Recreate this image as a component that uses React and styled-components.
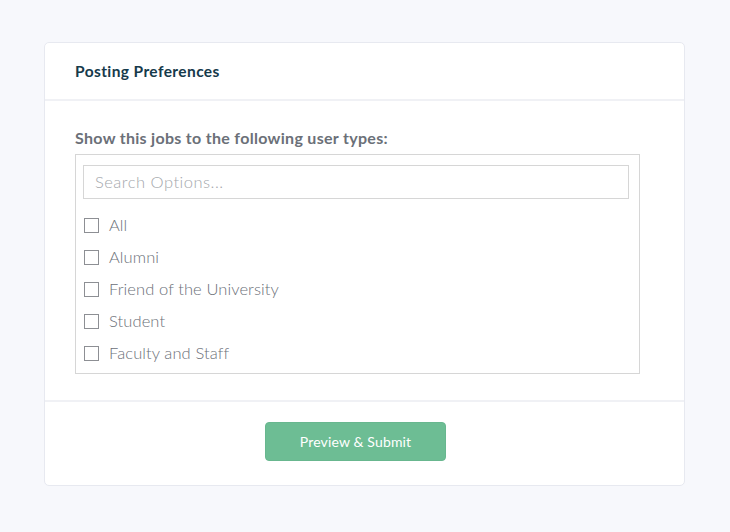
import styled, { createGlobalStyle } from 'styled-components';

const GlobalStyle = createGlobalStyle`
  body {
    margin: 0;
    background: #f7f8fc;
    font-family: Lato, "Noto Sans", sans-serif;
  }
`;

// fond de page
const Page = styled.div`
  padding: 42px 45px 45px 44px;
`;

// carte principale
const Card = styled.section`
  background: #fff;
  border: 1px solid #e7e9f0;
  border-radius: 5px;
`;

const Header = styled.header`
  height: 56px;
  display: flex;
  align-items: center;
  padding: 0 30px;
  border-bottom: 2px solid #f0f1f5;
`;

const Title = styled.h2`
  margin: 0;
  font-size: 15.5px;
  font-weight: 700;
  letter-spacing: 0.4px;
  color: #163a4b;
`;

const Body = styled.div`
  padding: 27px 30px 26px;
  border-bottom: 2px solid #f0f1f5;
`;

const Label = styled.div`
  font-size: 16px;
  font-weight: 700;
  letter-spacing: 0.3px;
  color: #6b7078;
  margin-bottom: 7px;
`;

// liste des options
const OptionsBox = styled.div`
  width: 565px;
  box-sizing: border-box;
  border: 1px solid #d6d6d6;
  padding: 10px 10px 4px 7px;
`;

const Search = styled.input`
  display: block;
  width: 100%;
  height: 34px;
  box-sizing: border-box;
  border: 1px solid #d6d6d6;
  padding: 0 11px;
  font-family: inherit;
  font-size: 16.5px;
  font-weight: 300;
  letter-spacing: 0.5px;
  color: #666;
  outline: none;
  margin-bottom: 10px;
  &::placeholder {
    color: #a4a7ac;
  }
`;

const Option = styled.label`
  display: flex;
  align-items: center;
  height: 32px;
  gap: 10px;
  font-size: 16.5px;
  font-weight: 300;
  letter-spacing: 0.1px;
  color: #6b7078;
  cursor: pointer;
`;

const Box = styled.span`
  width: 15px;
  height: 15px;
  box-sizing: border-box;
  border: 1px solid #8d8f94;
  margin-left: 1px;
`;

const Footer = styled.footer`
  padding: 20px 30px 24px;
`;

const ButtonRow = styled.div`
  width: 565px;
  display: flex;
  justify-content: center;
`;

const Button = styled.button`
  width: 181px;
  height: 39px;
  border: 1px solid #68b78f;
  border-radius: 4px;
  background: #6dbd94;
  color: #fff;
  font-family: inherit;
  font-size: 14px;
  font-weight: 400;
  letter-spacing: 0.15px;
  margin-right: 4px;
  cursor: pointer;
`;

const options = ['All', 'Alumni', 'Friend of the University', 'Student', 'Faculty and Staff'];

const App = () => (
  <>
    <GlobalStyle />
    <Page>
      <Card>
        <Header>
          <Title>Posting Preferences</Title>
        </Header>
        <Body>
          <Label>Show this jobs to the following user types:</Label>
          <OptionsBox>
            <Search placeholder='Search Options...' />
            {options.map((option) => (
              <Option key={option}>
                <Box />
                {option}
              </Option>
            ))}
          </OptionsBox>
        </Body>
        <Footer>
          <ButtonRow>
            <Button>Preview &amp; Submit</Button>
          </ButtonRow>
        </Footer>
      </Card>
    </Page>
  </>
);

export default App;
